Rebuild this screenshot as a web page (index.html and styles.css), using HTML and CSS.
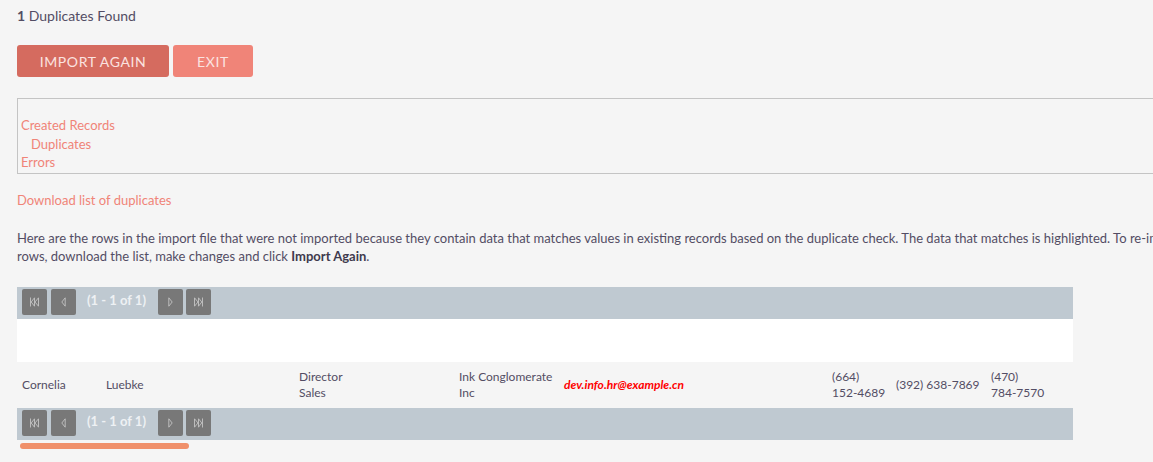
FILE: index.html
```html
<!DOCTYPE html>
<html>
<head>
<meta charset="utf-8">
<link rel="stylesheet" href="styles.css">
</head>
<body>
<div class="page">
  <div class="title"><b>1</b> Duplicates Found</div>
  <div class="actions">
    <button class="btn btn-primary">IMPORT AGAIN</button>
    <button class="btn btn-secondary">EXIT</button>
  </div>
  <div class="tabs">
    <a class="link">Created Records</a>
    <a class="link indent">Duplicates</a>
    <a class="link">Errors</a>
  </div>
  <a class="link download">Download list of duplicates</a>
  <p class="desc">Here are the rows in the import file that were not imported because they contain data that matches values in existing records based on the duplicate check. The data that matches is highlighted. To re-import these<br>rows, download the list, make changes and click <b>Import Again</b>.</p>

  <div class="list">
    <div class="pager">
      <span class="pbtn"><svg width="9" height="10" viewBox="0 0 9 10"><path d="M0.5 0.5v9M4.5 0.8L1.2 5 4.5 9.2zM8.5 0.8L5 5 8.5 9.2z" fill="none" stroke="#c4c4c4" stroke-width="0.9"/></svg></span>
      <span class="pbtn"><svg width="5" height="10" viewBox="0 0 5 10"><path d="M4.2 0.8L0.8 5 4.2 9.2z" fill="none" stroke="#c4c4c4" stroke-width="0.9"/></svg></span>
      <span class="pcount">(1 - 1 of 1)</span>
      <span class="pbtn"><svg width="5" height="10" viewBox="0 0 5 10"><path d="M0.8 0.8L4.2 5 0.8 9.2z" fill="none" stroke="#c4c4c4" stroke-width="0.9"/></svg></span>
      <span class="pbtn gap3"><svg width="9" height="10" viewBox="0 0 9 10"><path d="M8.5 0.5v9M4.5 0.8L7.8 5 4.5 9.2zM0.5 0.8L4 5 0.5 9.2z" fill="none" stroke="#c4c4c4" stroke-width="0.9"/></svg></span>
    </div>
    <table class="grid">
      <colgroup>
        <col class="c1"><col class="c2"><col class="c3"><col class="c4"><col class="c5"><col class="c6"><col class="c7"><col class="c8">
      </colgroup>
      <thead>
        <tr class="head"><th></th><th></th><th></th><th></th><th></th><th></th><th></th><th></th></tr>
      </thead>
      <tbody>
        <tr class="row">
          <td>Cornelia</td>
          <td>Luebke</td>
          <td>Director<br>Sales</td>
          <td>Ink Conglomerate<br>Inc</td>
          <td><span class="match">dev.info.hr@example.cn</span></td>
          <td>(664)<br>152-4689</td>
          <td>(392) 638-7869</td>
          <td>(470)<br>784-7570</td>
        </tr>
      </tbody>
    </table>
    <div class="pager">
      <span class="pbtn"><svg width="9" height="10" viewBox="0 0 9 10"><path d="M0.5 0.5v9M4.5 0.8L1.2 5 4.5 9.2zM8.5 0.8L5 5 8.5 9.2z" fill="none" stroke="#c4c4c4" stroke-width="0.9"/></svg></span>
      <span class="pbtn"><svg width="5" height="10" viewBox="0 0 5 10"><path d="M4.2 0.8L0.8 5 4.2 9.2z" fill="none" stroke="#c4c4c4" stroke-width="0.9"/></svg></span>
      <span class="pcount">(1 - 1 of 1)</span>
      <span class="pbtn"><svg width="5" height="10" viewBox="0 0 5 10"><path d="M0.8 0.8L4.2 5 0.8 9.2z" fill="none" stroke="#c4c4c4" stroke-width="0.9"/></svg></span>
      <span class="pbtn gap3"><svg width="9" height="10" viewBox="0 0 9 10"><path d="M8.5 0.5v9M4.5 0.8L7.8 5 4.5 9.2zM0.5 0.8L4 5 0.5 9.2z" fill="none" stroke="#c4c4c4" stroke-width="0.9"/></svg></span>
    </div>
    <div class="scrollbar"></div>
  </div>
</div>
</body>
</html>
```
FILE: styles.css
```css
html, body {
  margin: 0;
  padding: 0;
  overflow: hidden;
  background: #f5f5f5;
}
body {
  font-family: Lato, "Open Sans", sans-serif;
  color: #534d64;
  font-size: 13px;
}
.page {
  padding: 6px 0 0 17px;
  width: 1300px;
}
.title {
  font-size: 14px;
  line-height: 20px;
}
.title b { font-weight: 700; }
.actions {
  display: flex;
  gap: 4px;
  margin-top: 19px;
}
.btn {
  font-family: Lato, sans-serif;
  font-size: 14px;
  letter-spacing: 0.6px;
  color: #fbe3e0;
  border: none;
  border-radius: 3px;
  height: 32px;
  padding: 0;
  cursor: pointer;
}
.btn-primary {
  background: #d56b5f;
  width: 152px;
}
.btn-secondary {
  background: #f08478;
  width: 80px;
}
.tabs {
  margin-top: 21px;
  border: 1px solid #c4c4c4;
  border-right: none;
  padding: 17px 3px 1px;
  display: flex;
  flex-direction: column;
  width: 1200px;
}
.link {
  color: #f08478;
  font-size: 13px;
  line-height: 18.5px;
  text-decoration: none;
}
.indent { padding-left: 10px; }
.download {
  display: block;
  margin-top: 17px;
  line-height: 18px;
}
.desc {
  margin: 20px 0 0;
  line-height: 18px;
  font-size: 13px;
  white-space: nowrap;
}
.desc b { color: #3f3a4d; }
.list {
  margin-top: 22px;
  width: 1056px;
}
.pager {
  background: #bfc9d1;
  height: 32px;
  box-sizing: border-box;
  display: flex;
  align-items: flex-start;
  padding: 2px 0 0 5px;
  gap: 4px;
}
.pbtn {
  width: 25px;
  height: 26px;
  background: #787878;
  border-radius: 2px;
  display: flex;
  align-items: center;
  justify-content: center;
}
.pbtn.gap3 { margin-left: -1px; }
.pcount {
  color: #eef1f4;
  font-weight: 700;
  font-size: 13px;
  line-height: 16px;
  box-sizing: border-box;
  width: 74px;
  padding: 3px 0 0 7px;
}
.grid {
  border-collapse: collapse;
  table-layout: fixed;
  width: 100%;
}
.c1 { width: 84px; }
.c2 { width: 193px; }
.c3 { width: 160px; }
.c4 { width: 105px; }
.c5 { width: 268px; }
.c6 { width: 64px; }
.c7 { width: 95px; }
.c8 { width: 87px; }
.head th {
  background: #ffffff;
  height: 43px;
  padding: 0;
}
.row td {
  height: 46px;
  padding: 0 5px;
  font-size: 12px;
  line-height: 16px;
  vertical-align: middle;
  white-space: nowrap;
}
.match {
  color: #ff0000;
  font-weight: 700;
  font-style: italic;
}
.scrollbar {
  margin: 3px 0 0 3px;
  width: 169px;
  height: 6px;
  border-radius: 3px;
  background: #f0906a;
}
```
